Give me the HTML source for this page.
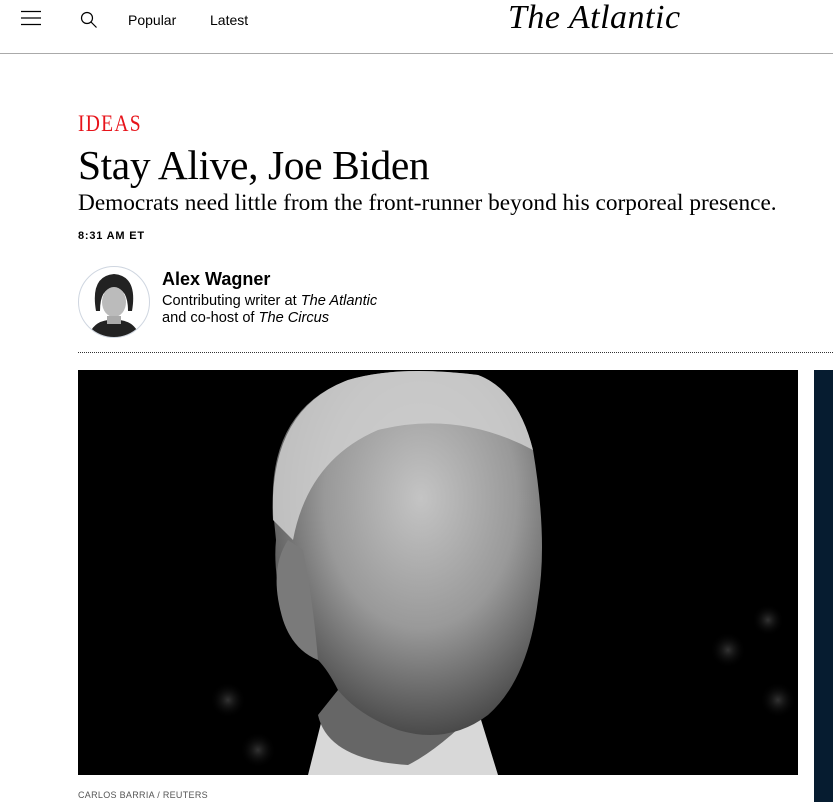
<!DOCTYPE html>
<html><head><meta charset="utf-8"><style>
*{margin:0;padding:0;box-sizing:border-box}
body{width:833px;height:802px;background:#fff;position:relative;overflow:hidden;font-family:"Liberation Sans",sans-serif;color:#000}
.a{position:absolute}
.serif{font-family:"Liberation Serif",serif}
</style></head><body>
<svg class="a" style="left:21px;top:10px" width="20" height="16"><path d="M0 1.5H20M0 8H20M0 14.5H20" stroke="#000" stroke-width="1.2"/></svg>
<svg class="a" style="left:80px;top:11px" width="18" height="18"><circle cx="7" cy="7" r="5.5" fill="none" stroke="#000" stroke-width="1.2"/><path d="M11 11L16.5 16.5" stroke="#000" stroke-width="1.2"/></svg>
<div class="a" style="left:128px;top:12px;font-size:14px">Popular</div>
<div class="a" style="left:210px;top:12px;font-size:14px">Latest</div>
<div class="a serif" style="left:508px;top:-1px;font-size:34px;font-style:italic;letter-spacing:0.5px">The Atlantic</div>
<div class="a" style="left:0;top:53px;width:833px;height:1px;background:#aaa"></div>
<div class="a serif" style="left:78px;top:111px;font-size:23px;color:#e7131a;letter-spacing:1.5px;transform:scaleX(0.85);transform-origin:left">IDEAS</div>
<div class="a serif" style="left:78px;top:141px;font-size:41.5px;letter-spacing:-0.4px">Stay Alive, Joe Biden</div>
<div class="a serif" style="left:78px;top:190px;font-size:23.3px">Democrats need little from the front-runner beyond his corporeal presence.</div>
<div class="a" style="left:78px;top:230px;font-size:11px;font-weight:bold;letter-spacing:0.8px">8:31 AM ET</div>
<svg class="a" style="left:78px;top:266px" width="72" height="72"><defs><clipPath id="c"><circle cx="36" cy="36" r="35"/></clipPath></defs><circle cx="36" cy="36" r="35.5" fill="#fff" stroke="#cfd6e0"/><g clip-path="url(#c)"><path d="M18 45Q12 10 36 8Q60 10 54 45L50 45Q50 22 36 22Q22 22 22 45Z" fill="#222"/><ellipse cx="36" cy="36" rx="12" ry="15" fill="#bbb"/><path d="M10 72Q14 56 30 54L42 54Q58 56 62 72Z" fill="#222"/><path d="M29 50h14v8H29z" fill="#aaa"/></g></svg>
<div class="a" style="left:162px;top:269px;font-size:18px;font-weight:bold">Alex Wagner</div>
<div class="a" style="left:162px;top:293px;font-size:14.6px;line-height:17px">Contributing writer at <i>The Atlantic</i><br>and co-host of <i>The Circus</i></div>
<div class="a" style="left:78px;top:352px;width:755px;border-top:1px dotted #333"></div>
<svg class="a" style="left:78px;top:370px" width="720" height="405"><defs>
<radialGradient id="h" cx="0.55" cy="0.35" r="0.65"><stop offset="0" stop-color="#c4c4c4"/><stop offset="0.55" stop-color="#999"/><stop offset="1" stop-color="#4a4a4a"/></radialGradient>
<radialGradient id="b" r="0.5"><stop offset="0" stop-color="#333"/><stop offset="1" stop-color="#000" stop-opacity="0"/></radialGradient></defs>
<rect width="720" height="405" fill="#000"/>
<circle cx="650" cy="280" r="18" fill="url(#b)"/><circle cx="700" cy="330" r="18" fill="url(#b)"/><circle cx="690" cy="250" r="16" fill="url(#b)"/><circle cx="150" cy="330" r="18" fill="url(#b)"/><circle cx="180" cy="380" r="18" fill="url(#b)"/>
<path d="M230 405L245 345L330 380L400 340L420 405Z" fill="#d8d8d8"/>
<path d="M240 345Q250 390 330 395Q360 380 400 340L380 320L260 320Z" fill="#666"/>
<path d="M195 140Q190 40 270 10Q320 -5 400 5Q440 20 455 80Q470 170 460 230Q450 310 410 345Q370 375 320 360Q280 345 260 320Q250 300 240 290Q215 280 205 240Q195 200 198 170Z" fill="url(#h)"/>
<path d="M195 150Q190 40 270 10Q320 -5 400 5Q440 20 455 80Q380 40 300 60Q230 90 215 170Z" fill="#cfcfcf" opacity="0.85"/>
<path d="M210 170Q190 200 205 250Q215 280 240 290Q235 230 225 180Z" fill="#7a7a7a"/>
</svg>
<div class="a" style="left:814px;top:370px;width:19px;height:432px;background:#061c30"></div>
<div class="a" style="left:78px;top:790px;font-size:9px;color:#555;letter-spacing:0.3px">CARLOS BARRIA / REUTERS</div>
</body></html>
